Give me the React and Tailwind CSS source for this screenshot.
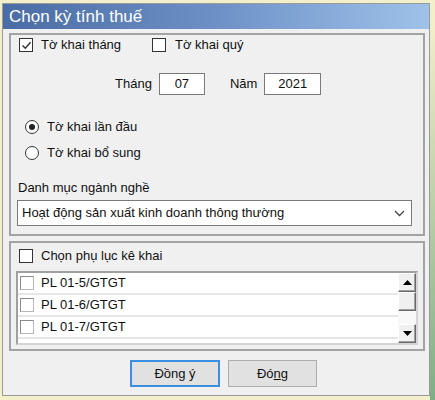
import React from "react";

const font = { fontFamily: '"Liberation Sans", Arial, sans-serif' };

const CheckBox = ({ checked = false, flat = false }) => (
  <span
    className={`flex items-center justify-center w-[14px] h-[14px] bg-white shrink-0 ${
      flat ? "border border-[#b8b8b8] border-t-[#8a8a8a] border-l-[#8a8a8a]" : "border border-[#333]"
    }`}
  >
    {checked && (
      <svg width="11" height="11" viewBox="0 0 11 11">
        <path d="M1.5 5.5 L4.3 8.3 L9.6 2.2" fill="none" stroke="#333" strokeWidth="1.4" />
      </svg>
    )}
  </span>
);

const Radio = ({ checked = false }) => (
  <span className="flex items-center justify-center w-[14px] h-[14px] rounded-full border border-[#333] bg-white shrink-0">
    {checked && <span className="w-[6px] h-[6px] rounded-full bg-[#222]" />}
  </span>
);

const ScrollBtn = ({ up }) => (
  <div className="flex items-center justify-center h-[19px] bg-[#f0f0f0] border border-t-white border-l-white border-b-[#696969] border-r-[#696969] shadow-[inset_-1px_-1px_0_#a0a0a0]">
    <svg width="9" height="5" viewBox="0 0 9 5">
      {up ? <path d="M0 5 L4.5 0 L9 5 Z" fill="#000" /> : <path d="M0 0 L4.5 5 L9 0 Z" fill="#000" />}
    </svg>
  </div>
);

const items = ["PL 01-5/GTGT", "PL 01-6/GTGT", "PL 01-7/GTGT"];

const App = () => {
  return (
    <div className="flex w-[435px] h-[400px] bg-[#f4efcb] overflow-hidden text-[13px] text-[#111]" style={font}>
      <div className="flex flex-col mt-[3px] ml-[2px] w-[428px] h-[393px] border border-[#9a9a9a] bg-[#f0f0f0]">
        <div className="flex items-center h-[25px] pl-[6px] bg-gradient-to-r from-[#4a6ca4] via-[#6d91c6] to-[#9fc2e9] text-white text-[17px]">
          Chọn kỳ tính thuế
        </div>

        <div className="flex flex-col pl-[6px] pr-[3px]">
          <div className="flex flex-col mt-[4px] w-[416px] border-2 border-[#a3a3a3]">
            <div className="flex items-center h-[20px] pl-[8px]">
              <div className="flex items-center gap-[8px] w-[133px]">
                <CheckBox checked />
                <span>Tờ khai tháng</span>
              </div>
              <div className="flex items-center gap-[9px]">
                <CheckBox />
                <span>Tờ khai quý</span>
              </div>
            </div>

            <div className="flex items-center mt-[18px] pl-[104px]">
              <span>Tháng</span>
              <div className="flex items-center justify-center ml-[7px] w-[46px] h-[22px] bg-white border border-[#7a7a7a]">07</div>
              <span className="ml-[25px]">Năm</span>
              <div className="flex items-center justify-center ml-[7px] w-[57px] h-[22px] bg-white border border-[#7a7a7a]">2021</div>
            </div>

            <div className="flex items-center gap-[8px] h-[20px] mt-[22px] pl-[14px]">
              <Radio checked />
              <span>Tờ khai lần đầu</span>
            </div>
            <div className="flex items-center gap-[8px] h-[20px] mt-[6px] pl-[14px]">
              <Radio />
              <span>Tờ khai bổ sung</span>
            </div>

            <div className="flex items-center h-[16px] mt-[17px] pl-[7px]">Danh mục ngành nghề</div>
            <div className="flex items-center justify-between ml-[6px] mt-[4px] mb-[8px] w-[395px] h-[26px] pl-[4px] pr-[6px] bg-white border border-[#7a7a7a]">
              <span>Hoạt động sản xuất kinh doanh thông thường</span>
              <svg width="11" height="7" viewBox="0 0 11 7">
                <path d="M1 1 L5.5 5.5 L10 1" fill="none" stroke="#444" strokeWidth="1.3" />
              </svg>
            </div>
          </div>

          <div className="flex flex-col mt-[5px] w-[416px] border-2 border-[#a3a3a3]">
            <div className="flex items-center gap-[8px] h-[20px] mt-[3px] pl-[8px]">
              <CheckBox />
              <span>Chọn phụ lục kê khai</span>
            </div>
            <div className="flex mt-[5px] mb-[4px] ml-[5px] w-[402px] h-[74px] bg-white border-2 border-[#a0a0a0] border-b-[#d4d4d4] border-r-[#d4d4d4] overflow-hidden">
              <div className="flex flex-col flex-1">
                {items.map((item, index) => (
                  <div
                    className="flex items-center gap-[7px] h-[22px] shrink-0 pl-[2px] border-b-2 border-[#e6e6e6]"
                    key={`pl-${index + 1}`}
                  >
                    <CheckBox flat />
                    <span>{item}</span>
                  </div>
                ))}
              </div>
              <div className="flex flex-col w-[18px] bg-[#f8f8f8]">
                <ScrollBtn up />
                <div className="h-[19px] bg-[#f0f0f0] border border-t-white border-l-white border-b-[#696969] border-r-[#696969] shadow-[inset_-1px_-1px_0_#a0a0a0]" />
                <div className="flex-1" />
                <ScrollBtn />
              </div>
            </div>
          </div>

          <div className="flex gap-[8px] mt-[9px] ml-[121px]">
            <button
              type="button"
              className="flex items-center justify-center w-[90px] h-[27px] bg-[#e1e1e1] border-2 border-[#3c8fe0]"
            >
              <span>
                Đồn<span className="underline">g</span> ý
              </span>
            </button>
            <button
              type="button"
              className="flex items-center justify-center w-[89px] h-[27px] bg-[#e1e1e1] border border-[#adadad]"
            >
              <span>
                Đó<span className="underline">n</span>g
              </span>
            </button>
          </div>
        </div>
      </div>
      <div className="flex-1 mt-[20px] bg-gradient-to-b from-[#f4efcb] to-[#7fae86]" />
    </div>
  );
};

export default App;
